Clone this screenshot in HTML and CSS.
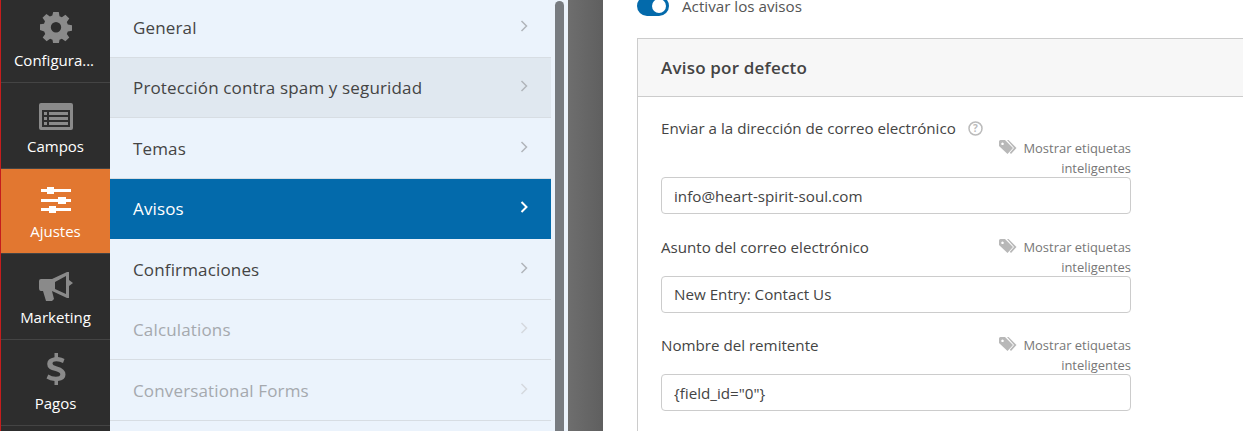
FILE: index.html
```html
<!DOCTYPE html>
<html lang="es">
<head>
<meta charset="utf-8">
<title>Avisos</title>
<link rel="stylesheet" href="styles.css">
</head>
<body>
<div class="app">
  <nav class="rail">
    <a class="rail-item rail-first">
      <svg class="rail-icon" width="32" height="32" viewBox="0 0 32 32"><path class="gear" fill-rule="evenodd" d="M13.2 1h5.600l.7 4.200 2.400 1 3.500-2.500 3.900 3.900-2.500 3.500 1 2.400 4.200.7v5.600l-4.200.7-1 2.400 2.500 3.500-3.900 3.900-3.500-2.500-2.400 1-.7 4.200h-5.600l-.7-4.200-2.400-1-3.500 2.500-3.900-3.900 2.500-3.500-1-2.400L-.2 19v-5.600l4.200-.7 1-2.400-2.500-3.500 3.900-3.900 3.500 2.500 2.400-1zM16 11a5.200 5.200 0 1 0 0 10.400a5.200 5.200 0 0 0 0-10.400z"/></svg>
      <span class="rail-clip">Configura...</span>
    </a>
    <a class="rail-item">
      <svg class="rail-icon" width="36" height="28" viewBox="0 0 36 28"><path class="gear" fill-rule="evenodd" d="M3 1h30a2 2 0 0 1 2 2v23a2 2 0 0 1-2 2H3a2 2 0 0 1-2-2V3a2 2 0 0 1 2-2zM4 8v17h28V8z"/><path class="gear" d="M6 10h3v3H6zM11 10h19v3H11zM6 15h3v3H6zM11 15h19v3H11zM6 20h3v3H6zM11 20h19v3H11z"/></svg>
      <span>Campos</span>
    </a>
    <a class="rail-item rail-active">
      <svg class="rail-icon" width="32" height="28" viewBox="0 0 32 28"><path class="white" d="M1 2h30v3H1zM1 12h30v3H1zM1 21h30v3H1z"/><path class="white" d="M7 0h7v7H7zM18 10h8v7h-8zM9 19h7v7H9z"/></svg>
      <span>Ajustes</span>
    </a>
    <a class="rail-item">
      <svg class="rail-icon" width="36" height="30" viewBox="0 0 36 30"><path class="gear" fill-rule="evenodd" d="M1 10q0-2 2-2h11L29 1h2v8l4 3-4 3v12h-2l-15-7 2 8-2 2H8L5 20H3q-2 0-2-3zM17 11v7l11 5V5z"/></svg>
      <span>Marketing</span>
    </a>
    <a class="rail-item">
      <svg class="rail-icon" width="20" height="34" viewBox="0 0 20 34"><path class="gear" d="M8.500 0h3.500v4q4 .4 6.500 2L17 10q-3-1.800-6.500-1.800-4 0-4 2.300 0 1.800 4.500 3 8.500 2.300 8.500 8 0 5.500-7.500 6.500v4H8.500v-4q-4.500-.4-8-2.500l1.800-4q3.500 2.300 7.500 2.300 4.500 0 4.500-2.500 0-2-4.800-3.300Q1.200 16.500 1.200 11q0-5.500 7.300-6.800z"/></svg>
      <span>Pagos</span>
    </a>
  </nav>

  <div class="menu">
    <a class="menu-row"><span>General</span><svg class="chev" width="8" height="12" viewBox="0 0 8 12"><path d="M1.500 1 6.500 6l-5 5"/></svg></a>
    <a class="menu-row menu-hover"><span>Protección contra spam y seguridad</span><svg class="chev" width="8" height="12" viewBox="0 0 8 12"><path d="M1.500 1 6.500 6l-5 5"/></svg></a>
    <a class="menu-row"><span>Temas</span><svg class="chev" width="8" height="12" viewBox="0 0 8 12"><path d="M1.500 1 6.500 6l-5 5"/></svg></a>
    <a class="menu-row menu-active"><span>Avisos</span><svg class="chev" width="8" height="12" viewBox="0 0 8 12"><path d="M1.500 1 6.500 6l-5 5"/></svg></a>
    <a class="menu-row"><span>Confirmaciones</span><svg class="chev" width="8" height="12" viewBox="0 0 8 12"><path d="M1.500 1 6.500 6l-5 5"/></svg></a>
    <a class="menu-row menu-off"><span>Calculations</span><svg class="chev" width="8" height="12" viewBox="0 0 8 12"><path d="M1.500 1 6.500 6l-5 5"/></svg></a>
    <a class="menu-row menu-off"><span>Conversational Forms</span><svg class="chev" width="8" height="12" viewBox="0 0 8 12"><path d="M1.500 1 6.500 6l-5 5"/></svg></a>
  </div>

  <div class="scroll-track"><div class="scroll-thumb"></div></div>
  <div class="gutter"></div>

  <main class="content">
    <div class="toggle-row">
      <span class="toggle"></span>
      <span class="toggle-label">Activar los avisos</span>
    </div>
    <section class="card">
      <header class="card-head">Aviso por defecto</header>
      <div class="card-body">
        <div class="field">
          <div class="field-top field-top-wrap">
            <label>Enviar a la dirección de correo electrónico <svg class="help" width="15" height="15" viewBox="0 0 15 15"><circle cx="7.500" cy="7.500" r="6.500"/><text x="7.500" y="11" text-anchor="middle">?</text></svg></label>
            <a class="tags"><svg class="tag" width="18" height="15" viewBox="0 0 18 15"><path d="M0 1.500Q0 0 1.500 0H6l8 8-5.500 6L0 6zM3.500 2.500a1.300 1.300 0 1 0 .01 0zM8 0h1.500l8 8-5.500 6-1.200-1.200L15 8z"/></svg> Mostrar etiquetas<br>inteligentes</a>
          </div>
          <input class="input" type="text" value="info@heart-spirit-soul.com">
        </div>
        <div class="field">
          <div class="field-top">
            <label>Asunto del correo electrónico</label>
            <a class="tags"><svg class="tag" width="18" height="15" viewBox="0 0 18 15"><path d="M0 1.500Q0 0 1.500 0H6l8 8-5.500 6L0 6zM3.500 2.500a1.300 1.300 0 1 0 .01 0zM8 0h1.500l8 8-5.500 6-1.200-1.200L15 8z"/></svg> Mostrar etiquetas<br>inteligentes</a>
          </div>
          <input class="input" type="text" value="New Entry: Contact Us">
        </div>
        <div class="field">
          <div class="field-top">
            <label>Nombre del remitente</label>
            <a class="tags"><svg class="tag" width="18" height="15" viewBox="0 0 18 15"><path d="M0 1.500Q0 0 1.500 0H6l8 8-5.500 6L0 6zM3.500 2.500a1.300 1.300 0 1 0 .01 0zM8 0h1.500l8 8-5.500 6-1.200-1.200L15 8z"/></svg> Mostrar etiquetas<br>inteligentes</a>
          </div>
          <input class="input" type="text" value="{field_id=&quot;0&quot;}">
        </div>
      </div>
    </section>
  </main>
</div>
</body>
</html>
```
FILE: styles.css
```css
* { box-sizing: border-box; }
html, body { margin: 0; height: 431px; overflow: hidden; background: #fff; }
body { font-family: "Open Sans", "Noto Sans", sans-serif; color: #444; }
.app { display: flex; height: 431px; overflow: hidden; }

.rail { width: 110px; flex: none; background: #2d2d2d; border-left: 1px solid #c41d1d; }
.rail-item { display: flex; flex-direction: column; align-items: center; justify-content: flex-end; height: 86px; padding-bottom: 12px; border-bottom: 1px solid #444; color: #fff; font-size: 15px; line-height: 20px; }
.rail-first { height: 83px; padding-bottom: 12px; }
.rail-first .rail-icon { margin-bottom: 7px; }
.rail-clip { margin-right: 3px; }
.rail-icon { margin-bottom: 6px; }
.gear { fill: #8a8a8a; }
.white { fill: #fff; }
.rail-active { background: #e27730; height: 85px; }

.menu { width: 441px; flex: none; background: #ebf3fc; }
.menu-row { display: flex; align-items: center; justify-content: space-between; height: 60.500px; padding: .8px 23px 0; border-bottom: 1px solid #d7dde3; font-size: 17px; letter-spacing: .15px; color: #444; }
.menu-row:first-child { height: 57.600px; padding: 0 23px 1px; }
.menu-hover { background: #e0e8f0; }
.menu-active { background: #036aab; color: #fff; border-bottom-color: #036aab; }
.menu-off { color: #a5a9ae; }
.chev { fill: none; stroke: #b0b5ba; stroke-width: 1.500; margin-bottom: 3px; }
.menu-off .chev { stroke: #d5d9de; }
.menu-active .chev { stroke: #fff; stroke-width: 2; }

.scroll-track { width: 17px; flex: none; background: #ebf3fc; padding: 0 4px; }
.scroll-thumb { width: 9px; height: 431px; background: #777b80; border-radius: 5px 5px 0 0; margin-top: 1px; }
.gutter { width: 35px; flex: none; background: linear-gradient(90deg, #6e6e6e, #5f5f5f); }

.content { flex: 1; min-width: 0; padding-left: 34px; overflow: hidden; }
.toggle-row { display: flex; align-items: center; gap: 13px; height: 38px; margin-top: -18px; padding-top: 9px; }
.toggle { display: block; width: 32px; height: 20px; border-radius: 10px; background: #036aab; position: relative; }
.toggle::after { content: ""; position: absolute; right: 3px; top: 3px; width: 14px; height: 14px; border-radius: 50%; background: #fff; }
.toggle-label { font-size: 15.200px; color: #555; }

.card { width: 640px; border: 1px solid #ccc; border-right: 0; margin-top: 18px; }
.card-head { height: 58px; background: #f7f7f7; border-bottom: 1px solid #ccc; padding-left: 23px; display: flex; align-items: center; font-size: 17px; letter-spacing: .2px; font-weight: 600; color: #444; }
.card-body { padding: 21.500px 0 0 23px; }
.field { width: 470px; margin-bottom: 22.500px; }
.field-top { display: flex; justify-content: space-between; align-items: flex-start; }
.field-top-wrap { flex-wrap: wrap; justify-content: flex-end; }
.field-top-wrap label { width: 100%; padding-top: 0; }
.field-top label { font-size: 15.150px; line-height: 19.500px; color: #444; }
.field-top:not(.field-top-wrap) label { padding-top: 1px; }
.help { margin-left: 8px; vertical-align: -2px; }
.help circle { fill: none; stroke: #bbb; stroke-width: 1.500; }
.help text { font-size: 10px; font-weight: 700; fill: #bbb; }
.tags { width: 140px; height: 39px; text-align: right; font-size: 12.950px; line-height: 20px; color: #777; }
.tag { fill: #b8b8b8; vertical-align: -2px; margin-right: 3px; }
.input { display: block; width: 100%; height: 37px; border: 1px solid #ccc; border-radius: 4px; padding: 0 12px; font: inherit; font-size: 15.200px; color: #444; background: #fff; }
```
